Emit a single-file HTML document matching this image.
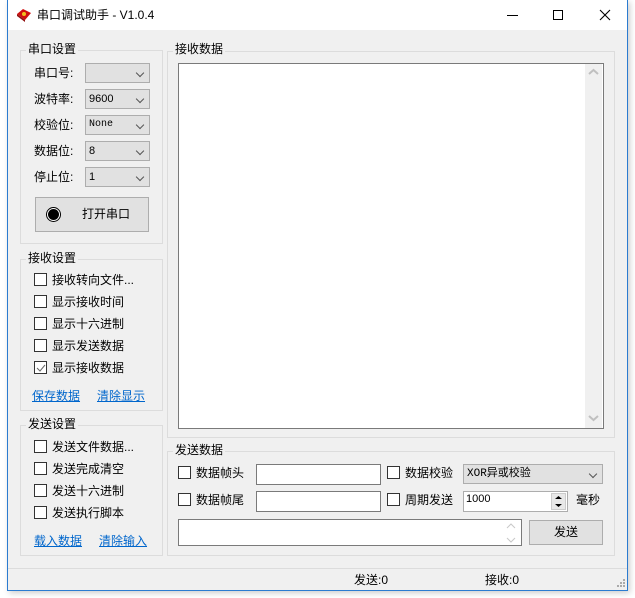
<!DOCTYPE html><html><head><meta charset="utf-8"><style>
*{box-sizing:border-box;margin:0;padding:0}
body{width:635px;height:598px;background:#fff;position:relative;overflow:hidden;font-family:"Liberation Sans","Noto Sans CJK SC",sans-serif;font-size:12px;color:#000}
.a{position:absolute}
.win{left:7px;top:0;width:621px;height:591px;border:1px solid #2b7bd0;border-top:none;background:#f0f0f0;box-shadow:2px 2px 6px rgba(0,0,0,.2)}
.tb{left:8px;top:0;width:619px;height:30px;background:#fff}
.g{position:absolute;border:1px solid #dcdcdc}
.gl{position:absolute;background:#f0f0f0;padding:0 2px;line-height:14px;font-size:12px}
.cb{position:absolute;width:20px;height:20px;border:1px solid #adadad;background:#e1e1e1;font-size:11px;padding-left:3px;line-height:18px}
.cb:after{content:"";position:absolute;right:6px;top:6px;width:5px;height:5px;border-right:1px solid #555;border-bottom:1px solid #555;transform:rotate(45deg)}
.ck{position:absolute;width:13px;height:13px;border:1px solid #333;background:#fff}
.t{position:absolute;line-height:14px;white-space:nowrap}
.lk{position:absolute;color:#0066cc;text-decoration:underline;line-height:14px}
.in{position:absolute;border:1px solid #7a7a7a;background:#fff}
.bt{position:absolute;border:1px solid #adadad;background:#e1e1e1;text-align:center}
</style></head><body>
<div class="a win"></div>
<div class="a tb"></div>
<svg class="a" style="left:15px;top:7px" width="18" height="16" viewBox="0 0 18 16"><path d="M2 7 L8 2 L16 6 L10 13Z" fill="#d01010"/><path d="M2 7 L10 13 L10 15 L2 9Z" fill="#901010"/><circle cx="9" cy="7" r="2" fill="#f0c020"/></svg>
<div class="t" style="left:37px;top:8px;font-size:12px">串口调试助手 - V1.0.4</div>
<div class="a" style="left:507px;top:15px;width:11px;height:1px;background:#000"></div>
<div class="a" style="left:553px;top:10px;width:10px;height:10px;border:1px solid #000"></div>
<svg class="a" style="left:599px;top:9px" width="12" height="12"><path d="M1 1L11 11M11 1L1 11" stroke="#000" stroke-width="1.1"/></svg>

<div class="g" style="left:20px;top:50px;width:143px;height:194px"></div>
<div class="gl" style="left:26px;top:42px">串口设置</div>
<div class="t" style="left:34px;top:66px">串口号:</div>
<div class="t" style="left:34px;top:92px">波特率:</div>
<div class="t" style="left:34px;top:118px">校验位:</div>
<div class="t" style="left:34px;top:144px">数据位:</div>
<div class="t" style="left:34px;top:170px">停止位:</div>
<div class="cb" style="left:85px;top:63px;width:65px"></div>
<div class="cb" style="left:85px;top:89px;width:65px">9600</div>
<div class="cb" style="left:85px;top:115px;width:65px;font-family:'Liberation Mono',monospace;font-size:10px">None</div>
<div class="cb" style="left:85px;top:141px;width:65px">8</div>
<div class="cb" style="left:85px;top:167px;width:65px">1</div>
<div class="bt" style="left:35px;top:197px;width:114px;height:35px"></div>
<div class="a" style="left:46px;top:207px;width:15px;height:15px;border-radius:50%;border:1px solid #000;background:#fff"></div>
<div class="a" style="left:48px;top:209px;width:11px;height:11px;border-radius:50%;background:#000"></div>
<div class="t" style="left:82px;top:207px">打开串口</div>

<div class="g" style="left:20px;top:259px;width:143px;height:152px"></div>
<div class="gl" style="left:26px;top:251px">接收设置</div>
<div class="ck" style="left:34px;top:273px"></div><div class="t" style="left:52px;top:273px">接收转向文件...</div>
<div class="ck" style="left:34px;top:295px"></div><div class="t" style="left:52px;top:295px">显示接收时间</div>
<div class="ck" style="left:34px;top:317px"></div><div class="t" style="left:52px;top:317px">显示十六进制</div>
<div class="ck" style="left:34px;top:339px"></div><div class="t" style="left:52px;top:339px">显示发送数据</div>
<div class="ck" style="left:34px;top:361px"></div><svg class="a" style="left:35px;top:362px" width="12" height="12"><path d="M2 6L5 9L10 3" stroke="#666" fill="none"/></svg><div class="t" style="left:52px;top:361px">显示接收数据</div>
<div class="lk" style="left:32px;top:389px">保存数据</div>
<div class="lk" style="left:97px;top:389px">清除显示</div>

<div class="g" style="left:20px;top:425px;width:143px;height:131px"></div>
<div class="gl" style="left:26px;top:417px">发送设置</div>
<div class="ck" style="left:34px;top:440px"></div><div class="t" style="left:52px;top:440px">发送文件数据...</div>
<div class="ck" style="left:34px;top:462px"></div><div class="t" style="left:52px;top:462px">发送完成清空</div>
<div class="ck" style="left:34px;top:484px"></div><div class="t" style="left:52px;top:484px">发送十六进制</div>
<div class="ck" style="left:34px;top:506px"></div><div class="t" style="left:52px;top:506px">发送执行脚本</div>
<div class="lk" style="left:34px;top:534px">载入数据</div>
<div class="lk" style="left:99px;top:534px">清除输入</div>

<div class="g" style="left:167px;top:51px;width:448px;height:387px"></div>
<div class="gl" style="left:173px;top:42px">接收数据</div>
<div class="in" style="left:178px;top:63px;width:426px;height:366px"></div>
<div class="a" style="left:585px;top:64px;width:17px;height:364px;background:#f0f0f0"></div>
<svg class="a" style="left:588px;top:68px" width="11" height="8"><path d="M1 6L5.5 2L10 6" stroke="#c0c0c0" stroke-width="2" fill="none"/></svg>
<svg class="a" style="left:588px;top:414px" width="11" height="8"><path d="M1 2L5.5 6L10 2" stroke="#c0c0c0" stroke-width="2" fill="none"/></svg>

<div class="g" style="left:167px;top:451px;width:448px;height:105px"></div>
<div class="gl" style="left:173px;top:443px">发送数据</div>
<div class="ck" style="left:178px;top:466px"></div><div class="t" style="left:196px;top:466px">数据帧头</div>
<div class="ck" style="left:178px;top:493px"></div><div class="t" style="left:196px;top:493px">数据帧尾</div>
<div class="in" style="left:256px;top:464px;width:125px;height:21px"></div>
<div class="in" style="left:256px;top:491px;width:125px;height:21px"></div>
<div class="ck" style="left:387px;top:466px"></div><div class="t" style="left:405px;top:466px">数据校验</div>
<div class="ck" style="left:387px;top:493px"></div><div class="t" style="left:405px;top:493px">周期发送</div>
<div class="cb" style="left:463px;top:464px;width:140px;height:20px;font-family:'Liberation Mono','Noto Sans CJK SC',monospace;font-size:11px">XOR异或校验</div>
<div class="in" style="left:463px;top:491px;width:105px;height:21px;border-color:#adadad;padding-left:2px;line-height:14px;font-size:11px">1000</div>
<div class="a" style="left:551px;top:493px;width:15px;height:17px;background:#e8e8e8;border:1px solid #ccc"></div>
<svg class="a" style="left:554px;top:494px" width="9" height="15"><path d="M1 5L4.5 2L8 5Z M1 10L4.5 13L8 10Z" fill="#000"/></svg>
<div class="t" style="left:576px;top:493px">毫秒</div>
<div class="in" style="left:178px;top:519px;width:344px;height:27px"></div>
<svg class="a" style="left:506px;top:522px" width="10" height="22"><path d="M1 6L5 2L9 6M1 16L5 20L9 16" stroke="#c8c8c8" fill="none"/></svg>
<div class="bt" style="left:529px;top:520px;width:74px;height:25px;line-height:23px">发送</div>

<div class="a" style="left:8px;top:568px;width:619px;height:1px;background:#dcdcdc"></div>
<div class="t" style="left:354px;top:573px">发送:0</div>
<div class="t" style="left:485px;top:573px">接收:0</div>
<svg class="a" style="left:614px;top:578px" width="12" height="12"><g fill="#aaa"><rect x="9" y="1" width="2" height="2"/><rect x="6" y="4" width="2" height="2"/><rect x="9" y="4" width="2" height="2"/><rect x="3" y="7" width="2" height="2"/><rect x="6" y="7" width="2" height="2"/><rect x="9" y="7" width="2" height="2"/></g></svg>
</body></html>
